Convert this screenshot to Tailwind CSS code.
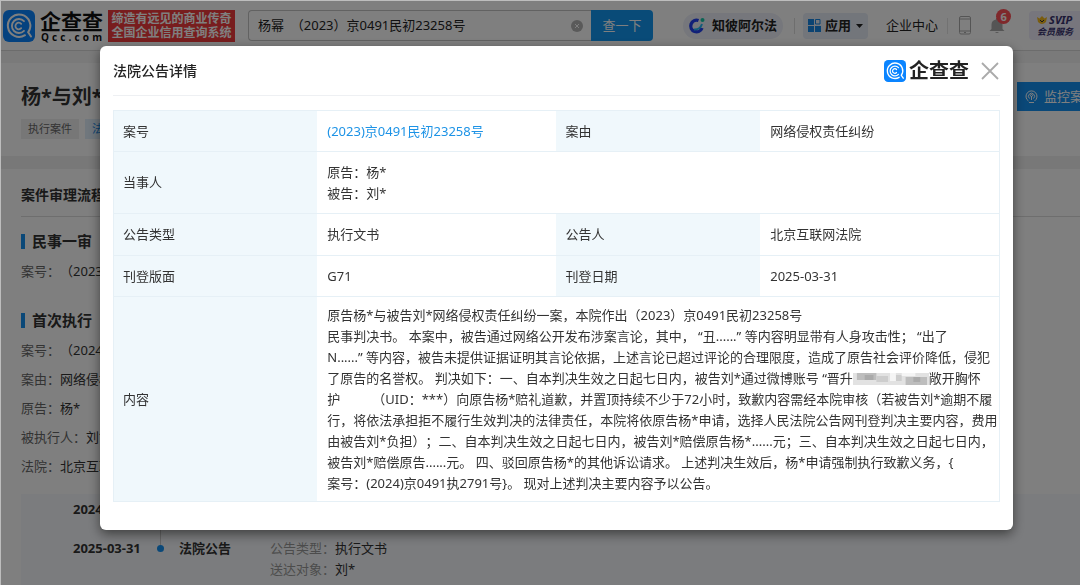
<!DOCTYPE html>
<html lang="zh-CN">
<head>
<meta charset="utf-8">
<meta name="viewport" content="width=device-width, initial-scale=1">
<title>法院公告详情 - 企查查</title>
<script src="https://cdn.jsdelivr.net/npm/@tailwindcss/browser@4"></script>
</head>
<body class="h-screen overflow-hidden border-t border-l border-[#bdbdbd] bg-white font-['Noto_Sans','Noto_Sans_CJK_SC',sans-serif] text-[13px] leading-[21px] text-[#333] [text-spacing-trim:space-all]">

<svg class="hidden" aria-hidden="true">
  <symbol id="logo" viewBox="0 0 32 32">
    <rect width="32" height="32" rx="6" fill="#0a84ff"/>
    <g fill="none" stroke="#fff" stroke-linecap="round">
      <path d="M22 25.200A11.200 11.200 0 1 1 25.200 22.200L28 26.500" stroke-width="2"/>
      <path d="M21 20.800A7 7 0 1 1 21 11.200" stroke-width="1.800"/>
      <path d="M18.200 18.200A3.300 3.300 0 1 1 18.200 13.800" stroke-width="1.800"/>
    </g>
  </symbol>
</svg>

<div class="flex h-full flex-col">
  <header class="flex h-[50px] shrink-0 items-center border-b border-[#d8d8d8] pl-[2px] whitespace-nowrap">
    <a href="#" class="flex shrink-0 items-center gap-[5px]" aria-label="企查查">
      <svg class="size-8"><use href="#logo"/></svg>
      <span class="flex flex-col items-center text-[#111]">
        <span class="text-[21px] leading-[22px] font-bold">企查查</span>
        <span class="flex w-full justify-between px-px font-['Open_Sans'] text-[10px] leading-[10px] font-bold"><span>Q</span><span>c</span><span>c</span><span>.</span><span>c</span><span>o</span><span>m</span></span>
      </span>
    </a>
    <div class="ml-[5px] flex h-8 w-[127px] shrink-0 flex-col justify-center bg-[#f03a3c] text-center text-[12px] leading-[14px] font-bold text-white">
      <span>缔造有远见的商业传奇</span><span>全国企业信用查询系统</span>
    </div>
    <form class="ml-[13px] flex h-[31px] shrink-0 items-stretch">
      <div class="flex w-[343px] items-center rounded-l-sm border border-r-0 border-[#c4c4c4] pr-2 pl-[9px]">
        <input type="text" aria-label="搜索" value="杨幂  （2023）京0491民初23258号" class="min-w-0 flex-1 bg-transparent text-[13px] text-[#222] outline-none [text-spacing-trim:space-all]">
        <button type="button" aria-label="清空"><svg class="size-3" viewBox="0 0 12 12"><circle cx="6" cy="6" r="6" fill="#b5b5b5"/><path d="M4 4l4 4M8 4l-4 4" stroke="#fff" fill="none"/></svg></button>
      </div>
      <button type="button" class="w-[62px] rounded-r-sm bg-[#1296f0] text-[13px] text-white">查一下</button>
    </form>
    <nav class="flex shrink-0 items-center text-[#222]">
      <a href="#" class="ml-[30px] flex h-[26px] items-center gap-[6px] rounded-full bg-[#eceff8] pr-[6px] pl-[5px] font-bold">
        <svg class="size-[18px]" viewBox="0 0 18 18"><path d="M10.500 3.500A5.800 5.800 0 1 0 14 11" fill="none" stroke="#2340f0" stroke-width="3.400"/><path d="M6 12.500Q12 13 14 7" fill="none" stroke="#25b8f4" stroke-width="2"/><circle cx="14.500" cy="3" r="2" fill="#16c7a8"/></svg>
        知彼阿尔法
      </a>
      <span class="ml-[11px] h-4 w-px bg-[#ddd]"></span>
      <button type="button" class="ml-2 flex h-[26px] items-center gap-1 rounded-sm bg-[#e6ecf7] px-[5px] font-bold">
        <svg class="size-[13px]" viewBox="0 0 13 13"><path d="M0 0h6v6H0zM0 7h6v6H0zM7 7h6v6H7z" fill="#1687e5"/><path d="M7.500.500h4.500v4.500H7.500z" fill="none" stroke="#1687e5"/></svg>
        应用
        <svg class="ml-px h-1 w-[7px]" viewBox="0 0 7 4"><path d="M0 0h7L3.500 4z" fill="#222"/></svg>
      </button>
      <a href="#" class="ml-[18px]">企业中心</a>
      <span class="ml-[9px] h-4 w-px bg-[#e5e5e5]"></span>
      <svg class="ml-[11px] h-[19px] w-3" viewBox="0 0 12 19" fill="none" stroke="#aaa"><rect x=".5" y=".5" width="11" height="17.500" rx="1.500"/><path d="M1 3h10M1 15h10M5 16.500h2"/></svg>
      <div class="relative ml-[18px]">
        <svg class="h-[17px] w-4" viewBox="0 0 16 17" fill="#aaa"><path d="M7 1h2v1.500c3 .600 4.500 2.500 4.500 5V12l2 2H.500l2-2V7.500c0-2.500 1.500-4.400 4.500-5zM6 15h4q-2 2-4 0z"/></svg>
        <span class="absolute -top-2 left-[7px] flex size-[15px] items-center justify-center rounded-full bg-[#ff5056] text-[11px] leading-none font-bold text-white">6</span>
      </div>
      <a href="#" class="ml-6 flex h-[29px] w-16 flex-col justify-center rounded-sm bg-[#eeecfa] pl-2 text-[#39336f] italic">
        <span class="flex items-center gap-[2px] text-[11px] leading-[12px] font-bold"><svg class="h-2 w-[10px]" viewBox="0 0 10 8"><path d="M0 1l2.500 1.500L5 0l2.500 2.500L10 1 9 6Q5 10 1 6z" fill="#f3b91f"/><path d="M3 4l2 2 2-2" fill="none" stroke="#333"/></svg>SVIP</span>
        <span class="text-[9px] leading-[12px] font-bold">会员服务</span>
      </a>
    </nav>
  </header>

  <div class="h-3 shrink-0 bg-[#f4f4f4]"></div>

  <section class="flex h-[93px] shrink-0 items-start justify-between pl-5 whitespace-nowrap">
    <div>
      <h1 class="mt-[21px] text-[20px] leading-[26px] font-bold">杨*与刘*</h1>
      <div class="mt-[9px] flex gap-[6px] text-[11px] leading-5">
        <span class="bg-[#eee] px-[7px] text-[#666]">执行案件</span>
        <span class="bg-[#e0effb] px-[7px] text-[#1687e5]">法院公告</span>
      </div>
    </div>
    <button type="button" class="mt-[19px] flex h-[29px] w-[63px] items-center gap-[6px] overflow-hidden bg-[#1590f0] pl-2 text-white">
      <svg class="size-[13px] shrink-0" viewBox="0 0 13 13" fill="none" stroke="#fff"><path d="M3.500 11A5.500 5.500 0 1 1 9.500 11M4.500 8.500a3 3 0 1 1 4 0M6.500 6v4M4 12.500h5"/><circle cx="6.500" cy="5.500" r="1"/></svg>监控案件
    </button>
  </section>

  <div class="h-[13px] shrink-0 bg-[#f0f0f0]"></div>

  <main class="flex flex-1 flex-col pl-5 whitespace-nowrap">
    <h2 class="border-b border-[#ddd] pt-[15px] pb-[11px] text-[14px] font-bold">案件审理流程</h2>
    <h3 class="mt-[14px] flex items-center gap-[7px] text-[15px] font-bold"><span class="h-[15px] w-1 bg-[#1590f0]"></span>民事一审</h3>
    <p class="mt-[9px]"><span class="text-[#666]">案号：</span>（2023）京0491民初23258号</p>
    <h3 class="mt-7 flex items-center gap-[7px] text-[15px] font-bold"><span class="h-[15px] w-1 bg-[#1590f0]"></span>首次执行</h3>
    <div class="mt-[9px] flex flex-col gap-2">
      <p><span class="text-[#666]">案号：</span>（2024）京0491执2791号</p>
      <p><span class="text-[#666]">案由：</span>网络侵权责任纠纷</p>
      <p><span class="text-[#666]">原告：</span>杨*</p>
      <p><span class="text-[#666]">被执行人：</span>刘*</p>
      <p><span class="text-[#666]">法院：</span>北京互联网法院</p>
    </div>
    <div class="mt-[17px] flex-1 bg-[#f7f9fc]">
      <div class="grid grid-cols-[139px_19px_91px_1fr] pt-[5px]">
        <div class="pl-[52px] font-bold">2024</div>
        <div class="row-span-2 flex flex-col"><span class="h-[46px] w-px bg-[#ccc]"></span><span class="-ml-[3px] size-[7px] shrink-0 rounded-full bg-[#1590f0]"></span></div>
        <div class="col-span-2 h-[39px]"></div>
        <div class="pl-[52px] font-bold">2025-03-31</div>
        <div class="font-bold">法院公告</div>
        <div><p><span class="text-[#999]">公告类型：</span>执行文书</p><p><span class="text-[#999]">送达对象：</span>刘*</p></div>
      </div>
    </div>
  </main>
</div>

<div class="fixed inset-0 mt-px ml-px flex items-start bg-black/50 pt-[45px] pr-[67px] pl-[99px]">
  <div role="dialog" aria-labelledby="dialog-title" class="flex-1 rounded-md bg-white px-[13px] pb-7 shadow-[0_4px_12px_rgba(0,0,0,0.5)]">
    <div class="flex h-[50px] items-center border-b border-[#eef0f3]">
      <h2 id="dialog-title" class="flex-1 text-[14px] font-medium text-[#222]">法院公告详情</h2>
      <svg class="size-[22px]" aria-hidden="true"><use href="#logo"/></svg>
      <span class="ml-[3px] text-[20px] leading-6 font-bold text-[#222]">企查查</span>
      <button type="button" aria-label="关闭" class="ml-3 mr-px"><svg class="size-[18px]" viewBox="0 0 18 18"><path d="M1 1l16 16M17 1L1 17" stroke="#aaa" stroke-width="1.800"/></svg></button>
    </div>
    <table class="mt-[14px] w-full table-fixed border-collapse border border-[#e6f0f6] text-left [&_td]:border-y [&_td]:border-[#e6f0f6] [&_td]:px-[10px] [&_th]:border-y [&_th]:border-[#e6f0f6] [&_th]:bg-[#f0f8fc] [&_th]:px-[9px] [&_th]:font-normal">
      <colgroup><col class="w-[23%]"><col class="w-[27%]"><col class="w-[23%]"><col class="w-[27%]"></colgroup>
      <tbody>
        <tr class="h-[41px]"><th scope="row">案号</th><td><a href="#" class="text-[#1d93e6]">(2023)京0491民初23258号</a></td><th scope="row">案由</th><td>网络侵权责任纠纷</td></tr>
        <tr class="h-[62px]"><th scope="row">当事人</th><td colspan="3">原告：杨*<br>被告：刘*</td></tr>
        <tr class="h-[42px]"><th scope="row">公告类型</th><td>执行文书</td><th scope="row">公告人</th><td>北京互联网法院</td></tr>
        <tr class="h-[41px]"><th scope="row">刊登版面</th><td>G71</td><th scope="row">刊登日期</th><td>2025-03-31</td></tr>
        <tr class="h-[205px]"><th scope="row">内容</th><td colspan="3" class="whitespace-nowrap">原告杨*与被告刘*网络侵权责任纠纷一案，本院作出（2023）京0491民初23258号<br>
民事判决书。 本案中，被告通过网络公开发布涉案言论，其中， “丑......” 等内容明显带有人身攻击性； “出了<br>
N......” 等内容，被告未提供证据证明其言论依据，上述言论已超过评论的合理限度，造成了原告社会评价降低，侵犯<br>
了原告的名誉权。 判决如下：一、自本判决生效之日起七日内，被告刘*通过微博账号 “晋升<svg class="inline-block h-3 w-[76px] align-middle" viewBox="0 0 78 12" preserveAspectRatio="none" aria-hidden="true"><path d="M0 0h78v12H0z" fill="#e2e2e2"/><path d="M4 0h20v7H4zM54 4h22v8H54z" fill="#bdbdbd"/><path d="M12 2h9v5h-9zM62 4h7v5h-7z" fill="#aaa"/><path d="M24 3h12v6H24zM44 2h6v6h-6z" fill="#cdcdcd"/><path d="M38 0h6v8h-6zM50 0h14v3H50z" fill="#f5f5f5"/></svg>敞开胸怀<br>
<span class="mr-8">护</span>（UID：***）向原告杨*赔礼道歉，并置顶持续不少于72小时，致歉内容需经本院审核（若被告刘*逾期不履<br>
行，将依法承担拒不履行生效判决的法律责任，本院将依原告杨*申请，选择人民法院公告网刊登判决主要内容，费用<br>
由被告刘*负担）；二、自本判决生效之日起七日内，被告刘*赔偿原告杨*......元；三、自本判决生效之日起七日内，<br>
被告刘*赔偿原告......元。 四、驳回原告杨*的其他诉讼请求。 上述判决生效后，杨*申请强制执行致歉义务，{<br>
案号：(2024)京0491执2791号}。 现对上述判决主要内容予以公告。</td></tr>
      </tbody>
    </table>
  </div>
</div>
</body>
</html>
